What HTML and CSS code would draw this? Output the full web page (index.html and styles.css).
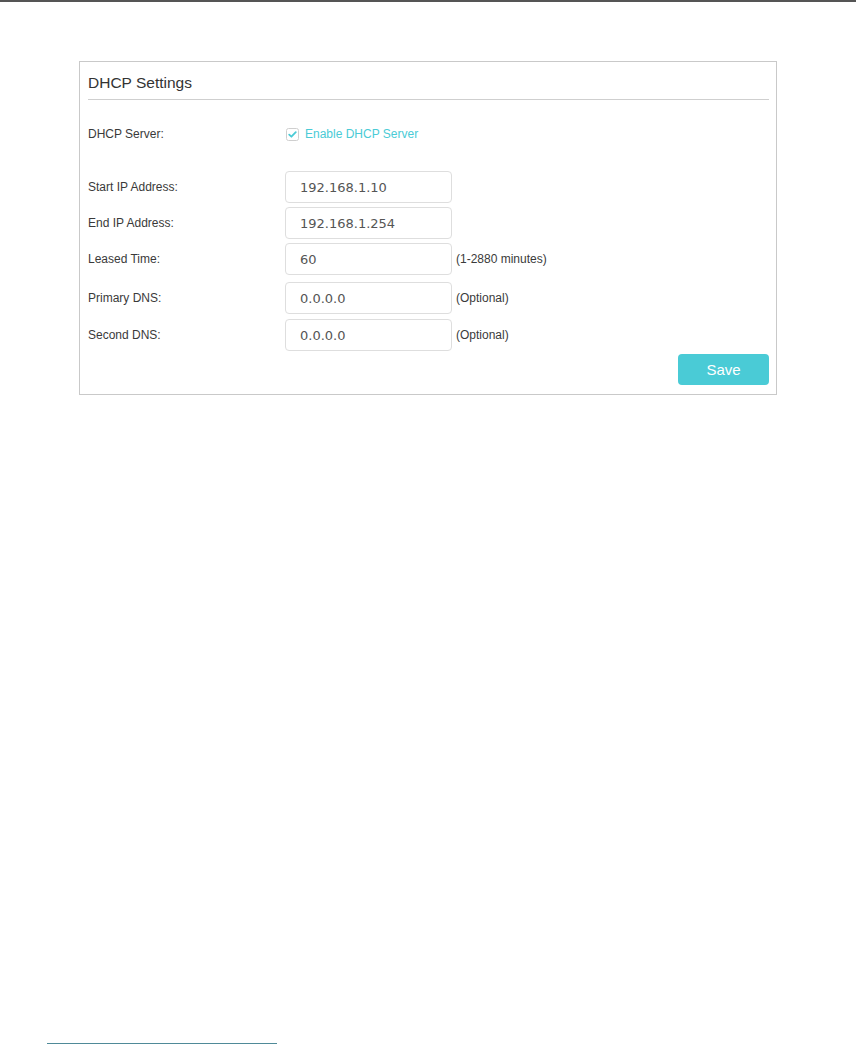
FILE: index.html
```html
<!DOCTYPE html>
<html lang="en">
<head>
    <meta charset="UTF-8">
    <meta name="viewport" content="width=device-width, initial-scale=1.0">
    <title>DHCP Settings</title>
    <link rel="stylesheet" href="styles.css">
</head>
<body>
<div class="page">
    <div class="top-rule"></div>
    <div class="panel">
        <div class="panel-title">DHCP Settings</div>
        <div class="row row-server">
            <div class="label">DHCP Server:</div>
            <label class="check">
                <svg class="check-box" width="13" height="13" viewBox="0 0 13 13">
                    <rect x="0.5" y="0.5" width="12" height="12" rx="2" fill="#fff" stroke="#cfcfcf"/>
                    <path d="M3.2 6.6 L5.4 8.7 L9.8 4.2" fill="none" stroke="#4acbd6" stroke-width="1.8" stroke-linecap="round" stroke-linejoin="round"/>
                </svg>
                <span>Enable DHCP Server</span>
            </label>
        </div>
        <div class="row row-first">
            <div class="label">Start IP Address:</div>
            <input class="field" type="text" value="192.168.1.10">
        </div>
        <div class="row">
            <div class="label">End IP Address:</div>
            <input class="field" type="text" value="192.168.1.254">
        </div>
        <div class="row">
            <div class="label">Leased Time:</div>
            <input class="field" type="text" value="60">
            <span class="hint">(1-2880 minutes)</span>
        </div>
        <div class="row row-dns1">
            <div class="label">Primary DNS:</div>
            <input class="field" type="text" value="0.0.0.0">
            <span class="hint">(Optional)</span>
        </div>
        <div class="row row-dns2">
            <div class="label">Second DNS:</div>
            <input class="field" type="text" value="0.0.0.0">
            <span class="hint">(Optional)</span>
        </div>
        <div class="actions">
            <button class="save">Save</button>
        </div>
    </div>
    <div class="foot-rule"></div>
</div>
</body>
</html>
```

FILE: styles.css
```css
*{
    box-sizing: border-box;
}
body{
    margin: 0;
    font-family: "Liberation Sans", Arial, sans-serif;
    color: #3a3a3a;
    background: #fff;
}
.page{
    min-height: 1044px;
    display: flex;
    flex-direction: column;
}
.top-rule{
    height: 2px;
    background: #555;
}
.panel{
    width: 698px;
    margin: 59px 0 0 79px;
    border: 1px solid #c9c9c9;
    padding: 0 7px 9px 8px;
}
.panel-title{
    font-size: 15.5px;
    line-height: 20px;
    padding: 11px 0 6px;
    border-bottom: 1px solid #cfcfcf;
    color: #333;
}
.row{
    display: flex;
    align-items: center;
    height: 32px;
    margin-top: 4px;
    font-size: 12px;
}
.row-server{
    height: 20px;
    margin-top: 24px;
}
.row-first{
    margin-top: 27px;
}
.row-dns1{
    margin-top: 7px;
}
.row-dns2{
    margin-top: 5px;
}
.label{
    width: 197px;
    flex-shrink: 0;
    color: #3a3a3a;
}
.check{
    display: flex;
    align-items: center;
    color: #4acbd6;
    margin-left: 1px;
}
.check-box{
    margin-right: 6px;
}
.field{
    width: 167px;
    height: 32px;
    border: 1px solid #dedede;
    border-radius: 4px;
    padding: 0 0 0 14px;
    font-family: "DejaVu Sans", Verdana, sans-serif;
    font-size: 13px;
    color: #555;
    background: #fff;
    outline: none;
}
.hint{
    margin-left: 4px;
    color: #3a3a3a;
}
.actions{
    display: flex;
    justify-content: flex-end;
    margin-top: 3px;
}
.save{
    width: 91px;
    height: 31px;
    border: none;
    border-radius: 4px;
    background: #4acbd6;
    color: #fff;
    font-family: "Liberation Sans", Arial, sans-serif;
    font-size: 15px;
}
.foot-rule{
    margin: auto 0 0 47px;
    width: 230px;
    height: 1px;
    background: #4f8a98;
}
```
